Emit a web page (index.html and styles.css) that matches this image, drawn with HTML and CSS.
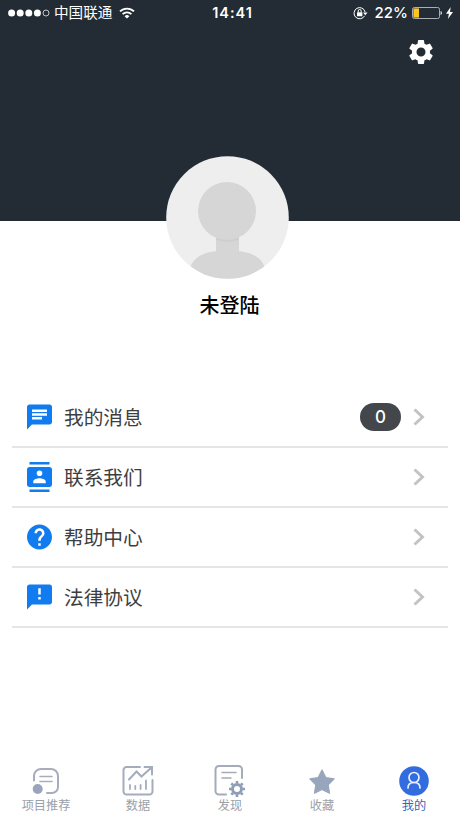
FILE: index.html
```html
<!DOCTYPE html>
<html lang="zh-CN">
<head>
<meta charset="utf-8">
<title>我的</title>
<link rel="stylesheet" href="styles.css">
</head>
<body>
<div class="screen">
  <header class="hero">
    <div class="status">
      <div class="status-left">
        <svg class="dots" width="42" height="10" viewBox="0 0 42 10"><g fill="#fff"><circle cx="3.6" cy="5" r="3.5"/><circle cx="12.2" cy="5" r="3.5"/><circle cx="20.8" cy="5" r="3.5"/><circle cx="29.4" cy="5" r="3.5"/></g><circle cx="38" cy="5" r="3" fill="none" stroke="#d5d8db" stroke-width=".9"/></svg>
        <span class="carrier">中国联通</span>
        <svg class="wifi" width="16" height="12" viewBox="0 0 16 12" fill="none" stroke="#fff" stroke-width="1.8"><path d="M1 4.4a10 10 0 0 1 14 0M3.6 7.2a6.2 6.2 0 0 1 8.8 0"/><path d="M8 11.6L5.6 9.2a3.4 3.4 0 0 1 4.8 0z" fill="#fff" stroke="none"/></svg>
      </div>
      <span class="clock">14:41</span>
      <div class="status-right">
        <svg class="lock" width="15" height="14" viewBox="0 0 15 14" fill="none" stroke="#fff"><path d="M11.600 9.800A5.600 5.600 0 1 1 12.100 6"/><path d="M10 6.400h4.600L12.300 9.200z" fill="#fff" stroke="none"/><rect x="4" y="6.200" width="5.400" height="4" rx=".5" fill="#fff" stroke="none"/><path d="M5.200 6.400V5a1.500 1.500 0 0 1 3 0v1.400"/></svg>
        <span class="percent">22%</span>
        <svg class="battery" width="31" height="12" viewBox="0 0 31 12"><rect x=".5" y=".5" width="27" height="11" rx="1.800" fill="none" stroke="#a9aeb2"/><path d="M1.400 1.400H7v9.200H1.400z" fill="#fcc81d"/><path d="M28.600 4c1.600.4 1.600 3.600 0 4z" fill="#fff"/></svg>
        <svg class="bolt" width="7" height="12" viewBox="0 0 7 12"><path d="M4.700 0L0 6.700h2.900L1.900 12 7 4.900H4z" fill="#fff"/></svg>
      </div>
    </div>
    <svg class="settings" width="30" height="30" viewBox="0 0 24 24" fill="#fff"><path d="M19.140 12.940c.04-.3.06-.61.06-.94 0-.32-.02-.64-.07-.94l2.030-1.580a.49.49 0 0 0 .12-.61l-1.920-3.320a.488.488 0 0 0-.59-.22l-2.390.96c-.5-.38-1.030-.7-1.620-.94l-.36-2.540a.484.484 0 0 0-.48-.41h-3.840c-.24 0-.43.17-.47.41l-.36 2.540c-.59.24-1.130.57-1.620.94l-2.390-.96c-.22-.08-.47 0-.59.22L2.740 8.870c-.12.21-.08.47.12.61l2.030 1.580c-.05.3-.09.63-.09.94s.02.64.07.94l-2.030 1.580a.49.49 0 0 0-.12.61l1.920 3.320c.12.22.37.29.59.22l2.390-.96c.5.38 1.030.7 1.620.94l.36 2.540c.05.24.24.41.48.41h3.840c.24 0 .44-.17.47-.41l.36-2.540c.59-.24 1.130-.56 1.620-.94l2.390.96c.22.08.47 0 .59-.22l1.920-3.320c.12-.22.07-.47-.12-.61l-2.010-1.580zM12 15.600A3.600 3.600 0 1 1 12 8.400a3.600 3.600 0 0 1 0 7.200z"/></svg>
  </header>

  <section class="profile">
    <svg class="avatar" width="123" height="123" viewBox="0 0 123 123">
      <defs><clipPath id="disc"><circle cx="61.500" cy="61.500" r="61.300"/></clipPath></defs>
      <g clip-path="url(#disc)"><path d="M0 0h123v123H0z" fill="#eee"/><g fill="#d6d6d6"><path d="M50 80h23v20H50z"/><path d="M24 113c2-12 16-18 30-18h15c14 0 28 6 30 18v12H24z"/></g><path d="M50 82h23v1.500a29 29 0 0 1-23 0z" fill="#cecece"/><circle cx="61" cy="55" r="29" fill="#d6d6d6"/></g>
    </svg>
    <div class="name">未登陆</div>
  </section>

  <nav class="menu">
    <div class="row">
      <svg class="icon" viewBox="0 0 24 24"><path d="M20 2H4c-1.100 0-2 .9-2 2v18l4-4h14c1.100 0 2-.9 2-2V4c0-1.100-.9-2-2-2zM6 9h12v2H6V9zm8 5H6v-2h8v2zm4-6H6V6h12v2z"/></svg>
      <span class="label">我的消息</span><span class="badge">0</span>
      <svg class="chevron" viewBox="0 0 12 18"><path d="M1.500 1.500L9.500 9l-8 7.500"/></svg>
    </div>
    <div class="row">
      <svg class="icon" viewBox="0 0 24 24"><path d="M20 0H4v2h16V0zM4 24h16v-2H4v2zM20 4H4c-1.100 0-2 .9-2 2v12c0 1.100.9 2 2 2h16c1.100 0 2-.9 2-2V6c0-1.100-.9-2-2-2zm-8 2.750a2.250 2.250 0 1 1 0 4.500 2.250 2.250 0 0 1 0-4.500zM17 17H7v-1.500c0-1.670 3.330-2.500 5-2.500s5 .83 5 2.500V17z"/></svg>
      <span class="label">联系我们</span>
      <svg class="chevron" viewBox="0 0 12 18"><path d="M1.500 1.500L9.500 9l-8 7.500"/></svg>
    </div>
    <div class="row">
      <svg class="icon" viewBox="0 0 24 24"><path d="M12 2C6.480 2 2 6.480 2 12s4.480 10 10 10 10-4.480 10-10S17.520 2 12 2zm1 17h-2v-2h2v2zm2.070-7.750l-.9.920C13.450 12.900 13 13.500 13 15h-2v-.5c0-1.100.45-2.100 1.170-2.830l1.240-1.260c.37-.36.59-.86.59-1.410 0-1.100-.9-2-2-2s-2 .9-2 2H8c0-2.210 1.790-4 4-4s4 1.790 4 4c0 .88-.36 1.680-.93 2.250z"/></svg>
      <span class="label">帮助中心</span>
      <svg class="chevron" viewBox="0 0 12 18"><path d="M1.500 1.500L9.500 9l-8 7.500"/></svg>
    </div>
    <div class="row">
      <svg class="icon" viewBox="0 0 24 24"><path d="M20 2H4c-1.100 0-1.990.9-1.990 2L2 22l4-4h14c1.100 0 2-.9 2-2V4c0-1.100-.9-2-2-2zm-7 12h-2v-2h2v2zm0-4h-2V5h2v5z"/></svg>
      <span class="label">法律协议</span>
      <svg class="chevron" viewBox="0 0 12 18"><path d="M1.500 1.500L9.500 9l-8 7.500"/></svg>
    </div>
  </nav>

  <footer class="tabs">
    <div class="tab">
      <svg width="32" height="32" viewBox="0 0 32 32" fill="none" stroke="#a6aebe" stroke-width="2" stroke-linecap="round"><path d="M4 15.500V11a7 7 0 0 1 7-7h10a7 7 0 0 1 7 7v11a6 6 0 0 1-6 6h-5"/><path d="M10 11.500h12M10 16.500h12" stroke-width="1.600"/><circle cx="7.700" cy="24" r="5" fill="#9aa5bd" stroke="none"/></svg>
      <span>项目推荐</span>
    </div>
    <div class="tab">
      <svg width="32" height="32" viewBox="0 0 32 32" fill="none" stroke="#a3adbd" stroke-width="2" stroke-linecap="round"><path d="M18 2H4.500a3 3 0 0 0-3 3v21.500a3 3 0 0 0 3 3h23a3 3 0 0 0 3-3V15"/><path d="M7 14.500l7.500-8 5 5L29.500 2.500M22.500 2h7.500v7.500"/><path d="M8 20v4M13.300 21v3M18.600 20v4M24 15.500V24" stroke-width="1.800"/></svg>
      <span>数据</span>
    </div>
    <div class="tab">
      <svg width="32" height="32" viewBox="0 0 32 32" fill="none" stroke="#a4abb9" stroke-width="2" stroke-linecap="round"><path d="M12 29.500H5A3.500 3.500 0 0 1 1.500 26V4.500A3.500 3.500 0 0 1 5 1h19.500A3.500 3.500 0 0 1 28 4.500V13"/><path d="M8 7.500h14M8 13h9" stroke-width="1.600"/><circle cx="23" cy="24" r="4.500" stroke="#8f9eb5" stroke-width="3"/><path d="M23 16v2.500m0 11V32M15 24h2.500m11 0H31M17.300 18.300l1.700 1.700m8 8 1.700 1.700m0-11.400-1.700 1.700m-8 8-1.700 1.700" stroke="#8f9eb5" stroke-width="2.600" stroke-linecap="butt"/></svg>
      <span>发现</span>
    </div>
    <div class="tab">
      <svg width="32" height="32" viewBox="0 0 32 32"><path d="M16 5l3.800 7.600 8.300 1.300-5.900 6 1.300 8.300L16 24.500l-7.500 3.700 1.300-8.300-5.900-6 8.300-1.300z" fill="#98a6bd" stroke="#98a6bd" stroke-width="1.200" stroke-linejoin="round"/></svg>
      <span>收藏</span>
    </div>
    <div class="tab active">
      <svg width="32" height="32" viewBox="0 0 32 32"><circle cx="16" cy="16" r="14.800" fill="#326cde"/><g fill="none" stroke="#e9f0ff" stroke-width="1.700" stroke-linecap="round"><circle cx="16" cy="12.500" r="5"/><path d="M10 23c0-3.500 2.500-5.500 6-5.500s6 2 6 5.500"/></g></svg>
      <span>我的</span>
    </div>
  </footer>
</div>
</body>
</html>
```
FILE: styles.css
```css
* { box-sizing: border-box; }
body { margin: 0; background: #fff; font-family: Roboto, "Noto Sans CJK SC", sans-serif; }
svg { display: block; flex: none; }
.screen { width: 460px; height: 818px; display: flex; flex-direction: column; overflow: hidden; }
.hero { height: 221px; flex: none; background: #232c34; display: flex; flex-direction: column; }
.status { height: 26px; display: grid; grid-template-columns: 1fr auto 1fr; align-items: center; padding: 0 7px 0 8px; color: #fff; }
.status-left, .status-right { height: 26px; display: flex; align-items: center; }
.status-right { justify-content: flex-end; }
.carrier { margin-left: 4px; padding-top: 1px; font-size: 14.600px; line-height: 25px; }
.wifi { margin-left: 7px; }
.clock { padding-left: 4px; font: 600 14.500px/26px Inter, sans-serif; letter-spacing: 1px; }
.percent { margin: 0 4px 0 7px; font: 500 15px/26px Inter, sans-serif; }
.bolt { margin-left: 3px; }
.settings { align-self: flex-end; margin: 11px 24px 0 0; }
.profile { height: 167px; flex: none; display: flex; flex-direction: column; align-items: center; }
.avatar { margin: -65px 6px 0 0; }
.name { margin-top: 12px; padding-right: 1px; font-size: 20px; line-height: 30px; font-weight: 500; color: #000; }
.menu { margin: 0 12px; }
.row { height: 60px; display: flex; align-items: center; padding: 0 23px 0 12px; border-bottom: 2px solid #e5e5e5; }
.icon { width: 31px; height: 30px; fill: #117bf0; }
.label { margin-left: 9px; padding-top: 3px; flex: 1; font-size: 19.700px; line-height: 30px; color: #3e3e3e; }
.badge { width: 41px; height: 28px; margin-right: 12px; border-radius: 14px; background: #43474b; color: #fff; font: 500 17px/28px Inter, sans-serif; text-align: center; }
.chevron { width: 12px; height: 18px; fill: none; stroke: #c1c3c5; stroke-width: 3; }
.tabs { margin-top: auto; height: 53px; display: flex; }
.tab { flex: 1; display: flex; flex-direction: column; align-items: center; color: #9b9fa8; font-size: 12.200px; line-height: 18px; }
.active { color: #3566bd; }
```
